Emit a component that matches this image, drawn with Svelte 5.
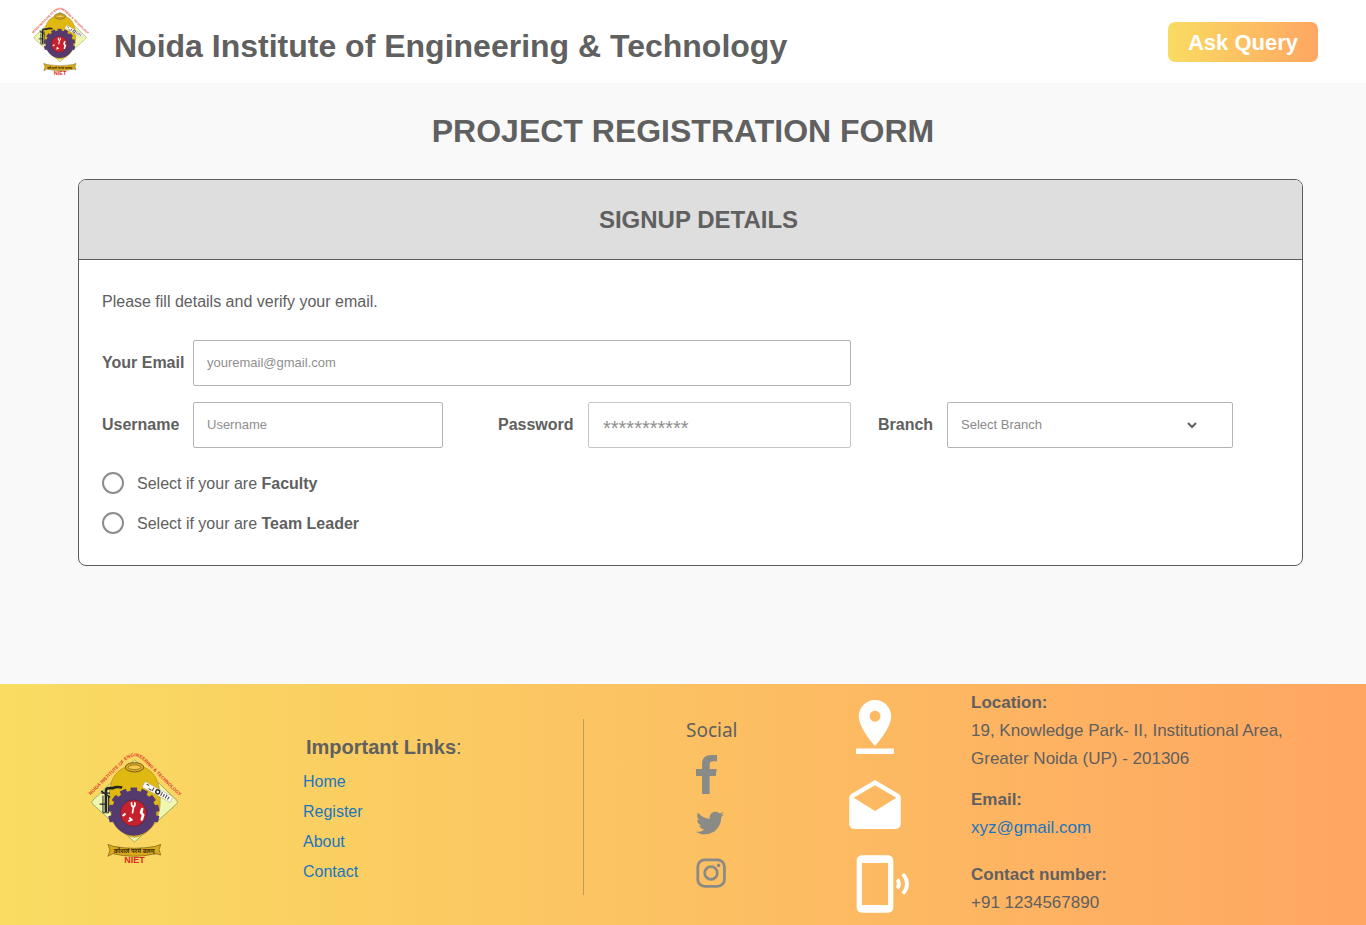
<script>
  const links = ['Home', 'Register', 'About', 'Contact'];
  const roles = ['Faculty', 'Team Leader'];
  const branches = ['Computer Science', 'Electronics', 'Mechanical', 'Civil'];
  let role = $state('');
  let branch = $state('');

  // Gear teeth on the upper part of the wheel of the crest
  const teeth = Array.from({ length: 9 }, (_, i) => -104 + i * 26);
</script>

{#snippet crest(id)}
  <svg class="crest" viewBox="22 20 286 340" role="img" aria-label="NIET crest">
    <defs>
      <path id={id} d="M31 152 L138 46 Q165 20 192 46 L302 155" />
    </defs>
    <path d="M165 44 L293 166 Q297 172 290 178 L165 291 L40 178 Q33 172 39 166 Z" fill="#eef6b0" stroke="#7d8a45" stroke-width="2" />
    <path d="M139 66 C100 78 85 122 89 176 C92 232 128 272 165 277 C206 272 240 230 242 176 C245 122 230 78 192 66 Z" fill="#dfb812" stroke="#b08c1c" stroke-width="2" />
    <ellipse cx="165" cy="66" rx="28" ry="14" fill="#d9a920" stroke="#7b5e1c" stroke-width="3" />
    <ellipse cx="165" cy="66" rx="19" ry="7" fill="#f2c94c" stroke="#7b5e1c" stroke-width="2" />
    <g fill="#553a70">
      <circle cx="163" cy="204" r="68" />
      {#each teeth as angle}
        <rect x="153" y="127" width="20" height="16" rx="2" transform="rotate({angle} 163 204)" />
      {/each}
    </g>
    <circle cx="162" cy="204" r="40" fill="#c5222d" stroke="#3b2550" stroke-width="2" />
    <g fill="none" stroke="#fff" stroke-linecap="round">
      <path d="M156 173 Q155 183 162 186 Q168 182 166 173 M162 186 L159 203" stroke-width="5" />
      <path d="M188 192 L185 202 L191 210 L187 223" stroke-width="8" />
      <path d="M131 211 L136 207 M151 219 L156 224 L149 227" stroke-width="6" />
    </g>
    <g fill="none" stroke="#252520">
      <path d="M79 201 V136 Q80 129 90 129 H100 Q109 123 128 127" stroke-width="8" />
      <path d="M65 137 L92 157 M65 144 H91 M60 177 H79" stroke-width="4" />
      <path d="M70 151 V203 H87 V151" stroke-width="3" />
    </g>
    <g transform="rotate(29 235 140)">
      <rect x="187" y="131" width="96" height="19" fill="#fbfbf4" stroke="#888" />
      <path d="M194 136 h9 M206 145 h10 M219 134 v12 M248 134 v12 M256 136 v10 M264 134 v12 M272 136 v10" stroke="#444" stroke-width="3" />
      <circle cx="235" cy="140" r="6" fill="#fff" stroke="#222" stroke-width="4" />
    </g>
    <path d="M85 298 L101 304 Q164 316 228 304 L244 298 L239 314 L244 330 L229 326 Q164 342 100 326 L85 334 L91 316 Z" fill="#d9a91a" stroke="#735b1a" stroke-width="2" />
    <text class="motto" x="164" y="325" text-anchor="middle">कौशलं परमं बलम्</text>
    <text class="short" x="165" y="353" text-anchor="middle">NIET</text>
    <text class="ring"><textPath href="#{id}" startOffset="50%" text-anchor="middle">NOIDA INSTITUTE OF ENGINEERING &amp; TECHNOLOGY</textPath></text>
  </svg>
{/snippet}

<header>
  <div class="logo">{@render crest('crest-ring-top')}</div>
  <p class="name">Noida Institute of Engineering &amp; Technology</p>
  <button type="button" class="ask">Ask Query</button>
</header>

<main>
  <h1>PROJECT REGISTRATION FORM</h1>
  <form class="card" onsubmit={(e) => e.preventDefault()}>
    <h2>SIGNUP DETAILS</h2>
    <div class="body">
      <p>Please fill details and verify your email.</p>
      <div class="fields">
        <label for="email">Your Email</label>
        <input class="wide" id="email" type="email" placeholder="youremail@gmail.com" />
        <label for="username">Username</label>
        <input id="username" type="text" placeholder="Username" />
        <label class="c-pass" for="password">Password</label>
        <input class="secret" id="password" type="password" placeholder="***********" />
        <label class="c-branch" for="branch">Branch</label>
        <div class="select">
          <select id="branch" bind:value={branch}>
            <option value="">Select Branch</option>
            {#each branches as b}
              <option value={b}>{b}</option>
            {/each}
          </select>
          <svg viewBox="0 0 10 7" aria-hidden="true"><path d="M1 1 L5 5 L9 1" /></svg>
        </div>
      </div>
      <div class="roles">
        {#each roles as r}
          <label><input type="radio" name="role" value={r} bind:group={role} /><span>Select if your are <b>{r}</b></span></label>
        {/each}
      </div>
    </div>
  </form>
</main>

<footer>
  <div class="brand">{@render crest('crest-ring-foot')}</div>
  <nav>
    <h3>Important Links<span>:</span></h3>
    <ul>
      {#each links as link}
        <li><a href="#{link.toLowerCase()}">{link}</a></li>
      {/each}
    </ul>
  </nav>
  <section class="social">
    <h3>Social</h3>
    <a href="#facebook" aria-label="Facebook">
      <svg width="21" height="39" viewBox="80 135 63 117"><path d="M98 252V198H80V177H98V163C98 144 108 135 126 135H143V154H132C124 154 121 157 121 165V177H142L139 198H121V252Z" /></svg>
    </a>
    <a href="#twitter" aria-label="Twitter">
      <svg width="28" height="24" viewBox="0 46 512 420"><path d="M459.37 151.716c.325 4.548.325 9.097.325 13.645 0 138.72-105.583 298.558-298.558 298.558-59.452 0-114.68-17.219-161.137-47.106 8.447.974 16.568 1.299 25.34 1.299 49.055 0 94.213-16.568 130.274-44.832-46.132-.975-84.792-31.188-98.112-72.772 6.498.974 12.995 1.624 19.818 1.624 9.421 0 18.843-1.3 27.614-3.573-48.081-9.747-84.143-51.98-84.143-102.985v-1.299c13.969 7.797 30.214 12.67 47.431 13.319-28.264-18.843-46.781-51.005-46.781-87.391 0-19.492 5.197-37.36 14.294-52.954 51.655 63.675 129.3 105.258 216.365 109.807-1.624-7.797-2.599-15.918-2.599-24.04 0-57.828 46.782-104.934 104.934-104.934 30.213 0 57.502 12.67 76.67 33.137 23.715-4.548 46.456-13.32 66.599-25.34-7.798 24.366-24.366 44.833-46.132 57.827 21.117-2.273 41.584-8.122 60.426-16.243-14.292 20.791-32.161 39.308-52.628 54.253z" /></svg>
    </a>
    <a href="#instagram" aria-label="Instagram">
      <svg width="30" height="30" viewBox="0 0 30 30"><g fill="none" stroke="#8a8a86" stroke-width="2.8"><rect x="1.8" y="1.8" width="26.6" height="26.6" rx="7" /><circle cx="15" cy="15" r="6.3" /></g><circle cx="22.6" cy="7.4" r="1.8" /></svg>
    </a>
  </section>
  <section class="contact">
    <div class="icons" aria-hidden="true">
      <svg width="38" height="54" viewBox="5 2 14 20"><path d="M18 8c0-3.31-2.69-6-6-6S6 4.69 6 8c0 4.5 6 11 6 11s6-6.5 6-11zm-8 0c0-1.1.9-2 2-2s2 .9 2 2-.89 2-2 2c-1.1 0-2-.9-2-2zM5 20v2h14v-2H5z" /></svg>
      <svg width="52" height="49" viewBox="2 1 20 19"><path d="M21.99 8c0-.72-.37-1.35-.94-1.7L12 1 2.95 6.3C2.38 6.65 2 7.28 2 8v10c0 1.1.9 2 2 2h16c1.1 0 2-.9 2-2l-.01-10zM12 13L3.74 7.84 12 3l8.26 4.84L12 13z" /></svg>
      <svg width="68" height="58" viewBox="-4 1 26 22"><path d="M20.1 7.7l-1 1c1.8 1.8 1.8 4.6 0 6.5l1 1c2.5-2.3 2.5-6.1 0-8.5zM18 9.8l-1 1c.5.7.5 1.6 0 2.3l1 1c1.2-1.2 1.2-3 0-4.3zM14 1H4c-1.1 0-2 .9-2 2v18c0 1.1.9 2 2 2h10c1.1 0 2-.9 2-2V3c0-1.1-.9-2-2-2zm0 19H4V4h10v16z" /></svg>
    </div>
    <dl>
      <dt>Location:</dt>
      <dd class="address">19, Knowledge Park- II, Institutional Area,<br />Greater Noida (UP) - 201306</dd>
      <dt>Email:</dt>
      <dd><a href="mailto:xyz@gmail.com">xyz@gmail.com</a></dd>
      <dt>Contact number:</dt>
      <dd>+91 1234567890</dd>
    </dl>
  </section>
</footer>

<style>
  :global(body) {
    margin: 0;
    background: #f9f9f9;
    color: #606060;
    font-family: 'Liberation Sans', Arial, sans-serif;
    font-size: 16px;
  }
  * {
    box-sizing: border-box;
  }
  h1, h2, h3, p, ul, dl, dd {
    margin: 0;
    padding: 0;
  }
  a {
    color: #1b76bd;
    text-decoration: none;
  }
  svg {
    display: block;
  }

  .crest {
    width: 100%;
  }
  .motto {
    font-family: 'Noto Sans', sans-serif;
    font-size: 18px;
    font-weight: bold;
    fill: #3f310c;
  }
  .short {
    font-size: 27px;
    font-weight: bold;
    fill: #dd2a25;
  }
  .ring {
    font-size: 14px;
    font-weight: bold;
    fill: #e0392c;
  }

  header {
    display: flex;
    align-items: center;
    height: 83px;
    padding: 0 48px 0 31px;
    background: #fff;
  }
  .logo {
    width: 58px;
  }
  .name {
    flex: 1;
    margin-left: 25px;
    padding-top: 10px;
    font-size: 32px;
    font-weight: bold;
  }
  .ask {
    width: 150px;
    height: 40px;
    padding: 2px 0 0;
    border: 0;
    border-radius: 7px;
    background: linear-gradient(90deg, #f9dc62, #ffa662);
    color: #fff;
    font: bold 22px 'Liberation Sans', Arial, sans-serif;
  }

  main {
    padding: 28px 0 118px;
  }
  h1 {
    margin: 0 0 28px;
    font-size: 32px;
    line-height: 40px;
    text-align: center;
  }
  .card {
    margin: 0 63px 0 78px;
    border: 1px solid #5c5c5c;
    border-radius: 8px;
    background: #fff;
    overflow: hidden;
  }
  h2 {
    padding-left: 16px;
    border-bottom: 1px solid #5c5c5c;
    background: #dedede;
    font-size: 24px;
    line-height: 79px;
    text-align: center;
  }
  .body {
    padding: 32px 69px 31px 23px;
  }
  .body p {
    line-height: 20px;
  }
  .fields {
    display: grid;
    grid-template-columns: 91px 250fr 145px 263fr 96px 286fr;
    row-gap: 16px;
    align-items: center;
    margin-top: 28px;
  }
  .fields label {
    font-weight: bold;
  }
  .wide {
    grid-column: 2 / 5;
  }
  .fields label[for='username'] {
    grid-column: 1;
  }
  .c-pass {
    padding-left: 55px;
  }
  .c-branch {
    padding-left: 27px;
  }
  .fields input,
  select {
    width: 100%;
    min-width: 0;
    height: 46px;
    padding: 0 13px 2px;
    border: 1px solid #b4b4b4;
    border-radius: 2px;
    background: #fff;
    color: #8a8a8a;
    font: 13px 'Liberation Sans', Arial, sans-serif;
  }
  .fields input::placeholder {
    color: #8f8f8f;
    opacity: 1;
  }
  .fields .secret {
    padding: 6px 14px 0;
    border-color: #c6c6c6;
    font-size: 20px;
  }
  .select {
    position: relative;
  }
  select {
    appearance: none;
  }
  .select svg {
    position: absolute;
    top: 20px;
    right: 36px;
    width: 10px;
    height: 7px;
    pointer-events: none;
  }
  .select path {
    fill: none;
    stroke: #606060;
    stroke-width: 2;
  }
  .roles {
    display: grid;
    gap: 18px;
    justify-items: start;
    margin-top: 24px;
  }
  .roles label {
    display: flex;
    align-items: center;
    gap: 13px;
  }
  .roles input {
    width: 22px;
    height: 22px;
    margin: 0;
    border: 2px solid #8c8c8c;
    border-radius: 50%;
    background: #fff;
    appearance: none;
  }
  .roles input:checked {
    background: radial-gradient(#8c8c8c 45%, #fff 50%);
  }
  .roles span {
    padding-top: 1px;
  }

  footer {
    display: grid;
    grid-template-columns: 303fr 281fr 257fr 525fr;
    background: linear-gradient(90deg, #f9dc62, #ffa662);
  }
  .brand {
    width: 95px;
    margin: 68px 0 0 87px;
  }
  nav {
    margin: 35px 0 30px;
    padding-top: 16px;
    border-right: 1px solid #c49b57;
  }
  nav h3 {
    padding-left: 3px;
    font-size: 20px;
    line-height: 24px;
  }
  nav h3 span {
    font-weight: normal;
  }
  nav ul {
    margin-top: 8px;
    list-style: none;
    line-height: 30px;
  }
  .social {
    display: flex;
    flex-direction: column;
    align-items: flex-start;
    padding: 34px 0 0 112px;
  }
  .social h3 {
    margin: 0 0 13px -10px;
    font: 19px/24px 'Noto Sans', sans-serif;
  }
  .social svg {
    fill: #8a8a86;
  }
  .social a {
    margin-bottom: 17px;
  }
  .social a:nth-of-type(2) {
    margin-bottom: 23px;
  }
  .contact {
    display: flex;
    gap: 62px;
    line-height: 28px;
  }
  .icons {
    display: flex;
    flex-direction: column;
    align-items: center;
    gap: 26px;
    padding-top: 16px;
  }
  .icons svg {
    fill: #fff;
  }
  dl {
    padding: 5px 0 8px;
    font-size: 17px;
  }
  dt {
    font-weight: bold;
  }
  dd + dt {
    margin-top: 19px;
  }
  .address + dt {
    margin-top: 13px;
  }
</style>
